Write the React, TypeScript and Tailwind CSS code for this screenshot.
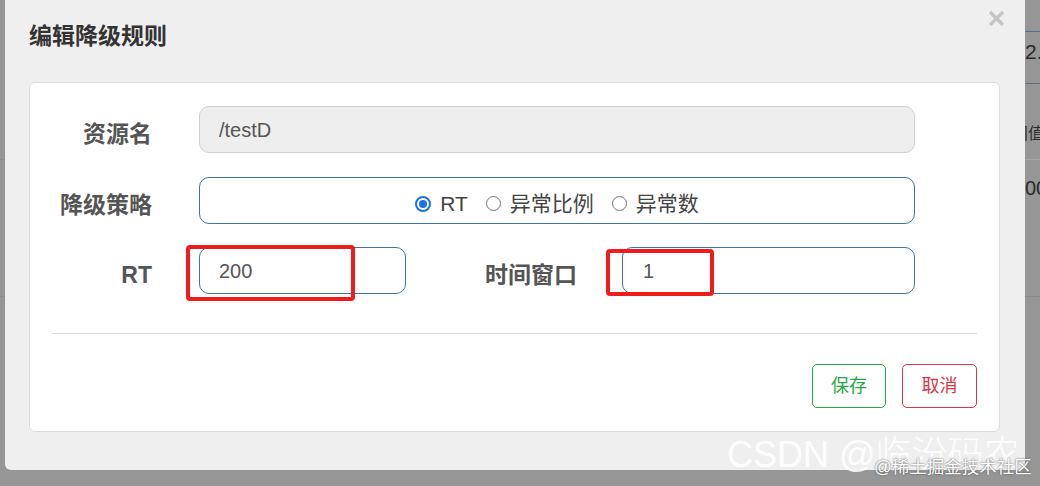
const font = "font-['Liberation_Sans','Noto_Sans_CJK_SC',sans-serif]";

function Radio({ checked, label }: { checked?: boolean; label: string }) {
  return (
    <label className="flex items-center gap-[9px]">
      {checked ? (
        <span className="flex h-[16px] w-[16px] items-center justify-center rounded-full border-2 border-[#1a73e8]">
          <span className="h-[8px] w-[8px] rounded-full bg-[#1a73e8]" />
        </span>
      ) : (
        <span className="h-[15px] w-[15px] rounded-full border border-[#767676]" />
      )}
      <span className="text-[21px] text-[#444]">{label}</span>
    </label>
  );
}

function Label({ text, width = 'w-[122px]' }: { text: string; width?: string }) {
  return (
    <div className={`${width} shrink-0 pt-[9px] text-right text-[23px] font-bold text-[#555]`}>
      {text}
    </div>
  );
}

export default function App() {
  return (
    <div className={`relative flex h-[486px] w-[1040px] overflow-hidden bg-[#969696] ${font}`}>
      {/* page behind backdrop, left */}
      <div className="flex w-[5px] shrink-0 flex-col">
        <div className="h-[160px] border-b border-[#8c8c8c]" />
        <div className="h-[137px] border-b border-[#8c8c8c]" />
      </div>

      {/* modal */}
      <div className="relative h-[470px] w-[1020px] shrink-0 rounded-b-[6px] bg-[#efefef] px-[24px] pt-[20px]">
        <h4 className="text-[23px] font-bold leading-[32px] text-[#333]">编辑降级规则</h4>
        <button className="absolute right-[20px] top-[10px]">
          <svg width="17" height="17" viewBox="0 0 17 17">
            <path d="M2 2L15 15M15 2L2 15" stroke="#c4c4c4" strokeWidth="3.2" />
          </svg>
        </button>

        <div className="mt-[30px] h-[350px] w-[971px] rounded-[6px] border border-[#dcdcdc] bg-white pt-[23px]">
          {/* 资源名 */}
          <div className="flex items-center">
            <Label text="资源名" />
            <div className="ml-[47px] flex h-[47px] w-[716px] items-center rounded-[10px] border border-[#cfcfcf] bg-[#eeeeee] pl-[19px] text-[20px] text-[#555]">
              /testD
            </div>
          </div>

          {/* 降级策略 */}
          <div className="mt-[24px] flex items-center">
            <Label text="降级策略" />
            <div className="ml-[47px] flex h-[47px] w-[716px] items-center justify-center gap-[18px] rounded-[10px] border border-[#3b76a8] pt-[6px]">
              <Radio checked label="RT" />
              <Radio label="异常比例" />
              <Radio label="异常数" />
            </div>
          </div>

          {/* RT / 时间窗口 */}
          <div className="mt-[23px] flex items-center">
            <Label text="RT" />
            <div className="relative ml-[47px] flex h-[47px] w-[207px] items-center rounded-[10px] border border-[#3b76a8] pl-[19px] text-[20px] text-[#555]">
              200
              <span className="absolute left-[-14px] top-[-3px] h-[56px] w-[169px] rounded-[4px] border-4 border-[#f01c1c]" />
            </div>
            <Label text="时间窗口" width="w-[171px]" />
            <div className="relative ml-[45px] flex h-[47px] w-[293px] items-center rounded-[10px] border border-[#3b76a8] pl-[20px] text-[20px] text-[#555]">
              1
              <span className="absolute left-[-17px] top-[1px] h-[47px] w-[108px] rounded-[4px] border-4 border-[#f01c1c]" />
            </div>
          </div>

          <div className="mx-[22px] mt-[39px] h-px bg-[#dddddd]" />

          <div className="mt-[30px] flex justify-end gap-[16px] pr-[22px]">
            <button className="h-[44px] w-[74px] rounded-[5px] border border-[#28a745] text-[18px] text-[#28a745]">
              保存
            </button>
            <button className="h-[44px] w-[75px] rounded-[5px] border border-[#dc3545] text-[18px] text-[#dc3545]">
              取消
            </button>
          </div>
        </div>
      </div>

      {/* page behind backdrop, right */}
      <div className="flex w-[15px] shrink-0 flex-col overflow-hidden whitespace-nowrap text-[#2a2a2a]">
        <div className="h-[32px] border-b border-[#50708e]" />
        <div className="h-[52px] border-b border-[#50708e] pt-[9px] text-[21px] leading-none">2.</div>
        <div className="h-[76px] border-b border-[#a8a8a8] pt-[42px] text-[16px] leading-none">
          <span className="ml-[-13px] block">阈值</span>
        </div>
        <div className="h-[137px] border-b border-[#8a8a8a] pt-[18px] text-[20px] leading-none">00</div>
      </div>

      {/* watermarks */}
      <span className="absolute left-[727px] top-[437px] text-[36px] font-light leading-none text-white/85">
        CSDN @临汾码农
      </span>
      <span className="absolute left-[874px] top-[459px] text-[17.5px] leading-none text-white [text-shadow:0_0_2px_#444]">
        @稀土掘金技术社区
      </span>
    </div>
  );
}
